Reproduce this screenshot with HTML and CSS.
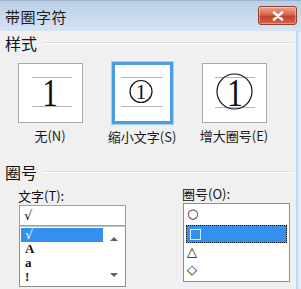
FILE: index.html
```html
<!DOCTYPE html>
<html lang="zh-CN">
<head>
  <meta charset="UTF-8" />
  <title>带圈字符</title>
  <link rel="stylesheet" href="styles.css">
</head>
<body>
  <div class="window">
    <div class="titlebar">
      <span class="title">带圈字符</span>
      <button class="close-btn" aria-label="关闭">
        <svg width="12" height="10" viewBox="0 0 12 10"><path d="M2 1.5l8 7M10 1.5l-8 7" stroke="#fff" stroke-width="2.6" stroke-linecap="round"/></svg>
      </button>
    </div>

    <div class="client">
      <div class="group-head"><span>样式</span></div>

      <div class="styles">
        <div class="opt">
          <div class="preview">
            <svg viewBox="0 0 63 58">
              <line x1="13" y1="13.5" x2="53" y2="13.5" class="guide"/>
              <line x1="13" y1="42.5" x2="53" y2="42.5" class="guide"/>
              <text x="0" y="42" class="digit thin" font-size="40" transform="translate(31 0) scale(0.78 1)">1</text>
            </svg>
          </div>
          <div class="opt-label">无(<u>N</u>)</div>
        </div>

        <div class="opt">
          <div class="preview selected">
            <svg viewBox="0 0 55 56">
              <line x1="6" y1="12.5" x2="48" y2="12.5" class="guide"/>
              <line x1="6" y1="41.5" x2="48" y2="41.5" class="guide"/>
              <circle cx="26" cy="26.5" r="11" class="ring"/>
              <text x="26" y="34" class="digit" font-size="21">1</text>
            </svg>
          </div>
          <div class="opt-label">缩小文字(<u>S</u>)</div>
        </div>

        <div class="opt">
          <div class="preview">
            <svg viewBox="0 0 63 58">
              <line x1="12" y1="13.5" x2="52" y2="13.5" class="guide"/>
              <line x1="12" y1="43.5" x2="52" y2="43.5" class="guide"/>
              <circle cx="31.5" cy="27.5" r="17.5" class="ring"/>
              <text x="0" y="42" class="digit" font-size="40" transform="translate(32 0) scale(0.8 1)">1</text>
            </svg>
          </div>
          <div class="opt-label">增大圈号(<u>E</u>)</div>
        </div>
      </div>

      <div class="group-head"><span>圈号</span></div>

      <div class="pickers">
        <div class="picker text-picker">
          <label class="picker-label">文字(<u>T</u>):</label>
          <div class="text-input">√</div>
          <div class="listbox">
            <ul class="items">
              <li class="active">√</li>
              <li>A</li>
              <li>a</li>
              <li>!</li>
            </ul>
            <div class="scrollbar">
              <span class="arrow up"></span>
              <span class="arrow down"></span>
            </div>
          </div>
        </div>

        <div class="picker ring-picker">
          <label class="picker-label">圈号(<u>O</u>):</label>
          <ul class="listbox rings">
            <li>○</li>
            <li class="active"><span class="sq"></span></li>
            <li>△</li>
            <li>◇</li>
          </ul>
        </div>
      </div>
    </div>
  </div>
</body>
</html>
```

FILE: styles.css
```css
:root {
  --frame: #c6daee;
  --face: #f0f0f0;
  --border: #a9a9a9;
  --list-border: #8e8f8f;
  --select: #3390ee;
  --text: #111;
}

* { box-sizing: border-box; }
body {
  margin: 0;
  width: 301px;
  height: 289px;
  overflow: hidden;
  font-family: "Noto Sans CJK SC", "Noto Sans", sans-serif;
  color: var(--text);
  background: var(--face);
}

.window {
  height: 289px;
  display: flex;
  flex-direction: column;
  background: linear-gradient(to right, var(--face) 0, var(--face) 296px, #a9cdea 296px, #d7e7f5 298px, #e3eef8 301px);
}

.titlebar {
  height: 31px;
  flex: 0 0 31px;
  display: flex;
  align-items: center;
  justify-content: space-between;
  padding: 0 4px 0 5px;
  background: linear-gradient(#b9cee7, #cbdbee 60%, #d6e3f2);
  border-top: 1px solid #9fb3cb;
}
.title { font-size: 15px; color: #1a1a1a; letter-spacing: 0.5px; }
.close-btn {
  width: 39px;
  height: 19px;
  margin-top: -1px;
  border: 1px solid #8d3f33;
  border-radius: 3px;
  background: linear-gradient(#eea48f, #d9664d 45%, #c4432c 55%, #d0654a);
  display: flex;
  align-items: center;
  justify-content: center;
  padding: 0;
  box-shadow: inset 0 0 0 1px rgba(255,255,255,0.35);
}

.client {
  flex: 1;
  margin-right: 5px;
  padding: 2px 0 0 5px;
  background: var(--face);
}

.group-head {
  display: flex;
  align-items: center;
  gap: 7px;
  height: 20px;
  font-size: 16px;
}
.group-head::after {
  content: "";
  flex: 1;
  border-top: 1px solid #dcdcdc;
  border-bottom: 1px solid #fff;
  margin-right: 2px;
}

.styles {
  display: grid;
  grid-template-columns: repeat(3, 92px);
  margin: 9px 0 0 -1px;
}
.opt { display: flex; flex-direction: column; align-items: center; }
.preview {
  width: 65px;
  height: 60px;
  margin-top: 1px;
  background: #fff;
  border: 1px solid var(--border);
}
.preview svg { display: block; width: 100%; height: 100%; }
.preview.selected {
  width: 61px;
  height: 62px;
  margin-top: 0;
  border: 3px solid #4c9ce3;
  box-shadow: 0 0 0 1px #a8d0f2;
}
.guide { stroke: #b8b8b8; stroke-width: 1; }
.ring { fill: none; stroke: #111; stroke-width: 1.2; }
.digit {
  font-family: "Liberation Serif", serif;
  text-anchor: middle;
  fill: #111;
}
.opt-label {
  margin-top: 4px;
  font-size: 13px;
  line-height: 18px;
  color: #1a1a1a;
}
.opt-label u { text-decoration: none; }

.styles + .group-head { margin-top: 16px; }

.pickers {
  display: flex;
  margin-top: 0;
}
.picker { display: flex; flex-direction: column; }
.text-picker { width: 107px; margin-left: 14px; padding-top: 5px; }
.ring-picker { width: 107px; margin-left: 57px; padding-top: 3px; }
.picker-label {
  font-size: 13px;
  line-height: 18px;
  margin-left: -1px;
}
.picker-label u { text-decoration: none; }

.text-input {
  height: 21px;
  background: #fff;
  border: 1px solid #a0a0a0;
  font-family: "DejaVu Sans", sans-serif;
  font-size: 13px;
  font-style: italic;
  line-height: 19px;
  padding-left: 4px;
}

.listbox {
  margin: 0;
  padding: 1px;
  list-style: none;
  background: #fff;
  border: 1px solid var(--list-border);
}
.text-picker .listbox {
  height: 61px;
  display: flex;
  border-top-color: #c4c4c4;
}
.items {
  flex: 1;
  margin: 0;
  padding: 0;
  list-style: none;
  font-family: "Liberation Serif", serif;
  font-weight: bold;
  font-size: 13px;
}
.items li { height: 14px; line-height: 14px; padding-left: 4px; }
.items li.active {
  background: var(--select);
  color: #fff;
  font-family: "DejaVu Sans", sans-serif;
  font-style: italic;
  font-weight: normal;
}
.scrollbar {
  width: 21px;
  display: flex;
  flex-direction: column;
  justify-content: space-between;
  align-items: center;
  padding: 9px 0 8px;
}
.arrow {
  width: 0;
  height: 0;
  border-left: 4px solid transparent;
  border-right: 4px solid transparent;
}
.arrow.up { border-bottom: 4px solid #606060; }
.arrow.down { border-top: 4px solid #606060; }

.rings {
  height: 79px;
  font-family: "DejaVu Sans", sans-serif;
  font-size: 13px;
}
.rings li { height: 18px; line-height: 18px; padding-left: 2px; }
.rings li.active {
  background: var(--select);
  outline: 1px dotted #1a1a1a;
  outline-offset: -1px;
  margin: 2px 1px 0;
  display: flex;
  align-items: center;
}
.sq {
  width: 11px;
  height: 11px;
  border: 1px solid #d8ecff;
  margin-left: 2px;
}
```
